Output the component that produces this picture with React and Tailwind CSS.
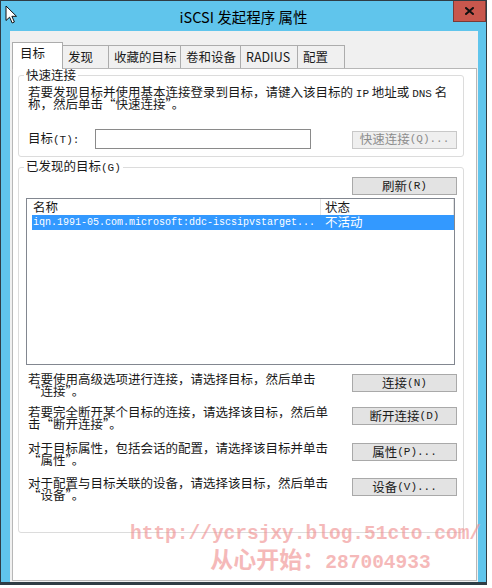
const TABS = [
  { label: "目标", w: "w-[51px]", active: true },
  { label: "发现", w: "w-[47px]" },
  { label: "收藏的目标", w: "w-[73px]" },
  { label: "卷和设备", w: "w-[61px]" },
  { label: "RADIUS", w: "w-[58px]" },
  { label: "配置", w: "w-[48px]" },
];

const ROWS = [
  { top: "mt-[8px]", lines: ["若要使用高级选项进行连接，请选择目标，然后单击", "“连接”。"], btn: "连接", key: "(N)" },
  { top: "mt-[9px]", lines: ["若要完全断开某个目标的连接，请选择该目标，然后单", "击“断开连接”。"], btn: "断开连接", key: "(D)" },
  { top: "mt-[12px]", lines: ["对于目标属性，包括会话的配置，请选择该目标并单击", "“属性”。"], btn: "属性", key: "(P)..." },
  { top: "mt-[11px]", lines: ["对于配置与目标关联的设备，请选择该目标，然后单击", "“设备”。"], btn: "设备", key: "(V)..." },
];

function L({ children }) {
  return <span className="font-['Liberation_Mono',monospace] text-[11px]">{children}</span>;
}

function Btn({ children, disabled }) {
  return (
    <div
      className={
        disabled
          ? "mt-px flex h-[18px] w-[105px] shrink-0 items-center justify-center border border-[#c8c8c8] bg-[#efefef] text-[12.5px] leading-none text-[#8c8c8c]"
          : "mt-px flex h-[18px] w-[105px] shrink-0 items-center justify-center border border-[#a9a9a9] bg-[#e3e3e3] text-[12.5px] leading-none text-[#1a1a1a]"
      }
    >
      {children}
    </div>
  );
}

function Cursor() {
  return (
    <svg className="absolute left-[4px] top-[4px]" width="13" height="20" viewBox="0 0 13 20">
      <path d="M1 1 L1 15.5 L4.6 12.2 L7.2 18 L9.4 17 L6.9 11.3 L11.5 11.3 Z" fill="#fff" stroke="#111" strokeWidth="1" strokeLinejoin="round" />
    </svg>
  );
}

// two tight lines, like the dialog's 9pt text
function Lines({ a, b }) {
  return (
    <div className="pl-[9px] text-[12.5px]">
      <div className="h-[12px] leading-[12px]">{a}</div>
      <div className="h-[12px] leading-[12px]">{b}</div>
    </div>
  );
}

export default function App() {
  return (
    <div className="relative h-[588px] w-[492px] overflow-hidden bg-white font-['Noto_Sans_CJK_SC',sans-serif] text-[#1a1a1a]">
      <div className="relative flex h-[585px] w-[487px] flex-col border border-b-[3px] border-[#2f3d45] bg-[#60c5ec]">
        <div className="flex h-[30px] shrink-0 items-center justify-center pt-[2px] text-[14.5px] leading-none text-black">
          iSCSI 发起程序 属性
        </div>
        <Cursor />
        <div className="absolute right-0 top-0 flex h-[21px] w-[33px] items-center justify-center border border-t-0 border-[#7a3a36] bg-[#c8574d]">
          <svg width="9" height="8" viewBox="0 0 9 8">
            <path d="M1 1 L8 7 M8 1 L1 7" stroke="#111" strokeWidth="2" strokeLinecap="square" />
          </svg>
        </div>

        <div className="ml-[9px] mr-[8px] flex flex-1 flex-col bg-[#f0f0f0] pb-px pl-[2px] pr-px pt-[11px]">
          <div className="flex h-[26px] items-end">
            {TABS.map((t, i) =>
              t.active ? (
                <div
                  key={t.label}
                  className={`relative z-10 -mb-px flex h-[27px] ${t.w} items-start border border-b-0 border-[#acacac] bg-white pl-[7px] pt-[4px] text-[12.5px] leading-[12px]`}
                >
                  {t.label}
                </div>
              ) : (
                <div
                  key={t.label}
                  className={`${i > 0 ? "-ml-px" : ""} flex h-[23px] ${t.w} items-start border border-b-0 border-[#acacac] bg-[#f0f0f0] pl-[5px] pt-[5px] text-[12.5px] leading-[12px]`}
                >
                  {t.label}
                </div>
              )
            )}
          </div>

          <div className="flex flex-1 flex-col border border-[#b7b7b7] bg-white">
            <fieldset className="ml-[5px] w-[446px] rounded-[3px] border border-[#dcdcdc] p-0">
              <legend className="ml-[5px] px-[2px] text-[12.5px] leading-[12px]">快速连接</legend>
              <div className="pb-[7px] pr-[6px] pt-[5px]">
                <Lines
                  a={
                    <>
                      若要发现目标并使用基本连接登录到目标，请键入该目标的 <L>IP</L> 地址或 <L>DNS</L> 名
                    </>
                  }
                  b="称，然后单击“快速连接”。"
                />
                <div className="mt-[19px] flex h-[20px] items-center pl-[9px]">
                  <div className="w-[67px] text-[12.5px] leading-none">
                    目标<L>(T):</L>
                  </div>
                  <div className="h-[20px] w-[216px] border border-[#8a8a8a] bg-white" />
                  <div className="ml-auto">
                    <Btn disabled>
                      快速连接<L>(Q)...</L>
                    </Btn>
                  </div>
                </div>
              </div>
            </fieldset>

            <fieldset className="ml-[5px] mt-[3px] w-[446px] rounded-[3px] border border-[#dcdcdc] p-0">
              <legend className="ml-[5px] px-[2px] text-[12.5px] leading-[12px]">
                已发现的目标<L>(G)</L>
              </legend>
              <div className="pb-[31px] pr-[6px] pt-[2px]">
                <div className="flex justify-end">
                  <Btn>
                    刷新<L>(R)</L>
                  </Btn>
                </div>
                <div className="ml-[7px] mt-[3px] h-[167px] w-[429px] border border-[#828790] bg-white">
                  <div className="flex h-[16px] items-center text-[12.5px] leading-none">
                    <div className="flex h-full w-[294px] items-center border-r border-[#e3e3e3] pl-[6px]">名称</div>
                    <div className="flex h-full flex-1 items-center border-r border-[#e3e3e3] pl-[4px]">状态</div>
                  </div>
                  <div className="ml-[5px] flex h-[15px] items-center bg-[#3399ff] text-white">
                    <div className="w-[289px] pl-px font-['Liberation_Mono',monospace] text-[10px] leading-none">
                      iqn.1991-05.com.microsoft:ddc-iscsipvstarget...
                    </div>
                    <div className="pl-[4px] text-[12.5px] leading-none">不活动</div>
                  </div>
                </div>

                {ROWS.map((r) => (
                  <div key={r.btn} className={`${r.top} flex items-start justify-between`}>
                    <Lines a={r.lines[0]} b={r.lines[1]} />
                    <Btn>
                      {r.btn}
                      <L>{r.key}</L>
                    </Btn>
                  </div>
                ))}
              </div>
            </fieldset>
          </div>
        </div>
      </div>

      <div className="pointer-events-none absolute left-[130px] top-[522px] flex flex-col items-center font-bold text-[#f08c8c] opacity-60">
        <div className="font-['Liberation_Mono',monospace] text-[19.5px] leading-[24px]">http://ycrsjxy.blog.51cto.com/</div>
        <div className="ml-[30px] text-[23px] leading-[24px]">
          从心开始：<span className="font-['Liberation_Mono',monospace] text-[19.5px]">287004933</span>
        </div>
      </div>
    </div>
  );
}
